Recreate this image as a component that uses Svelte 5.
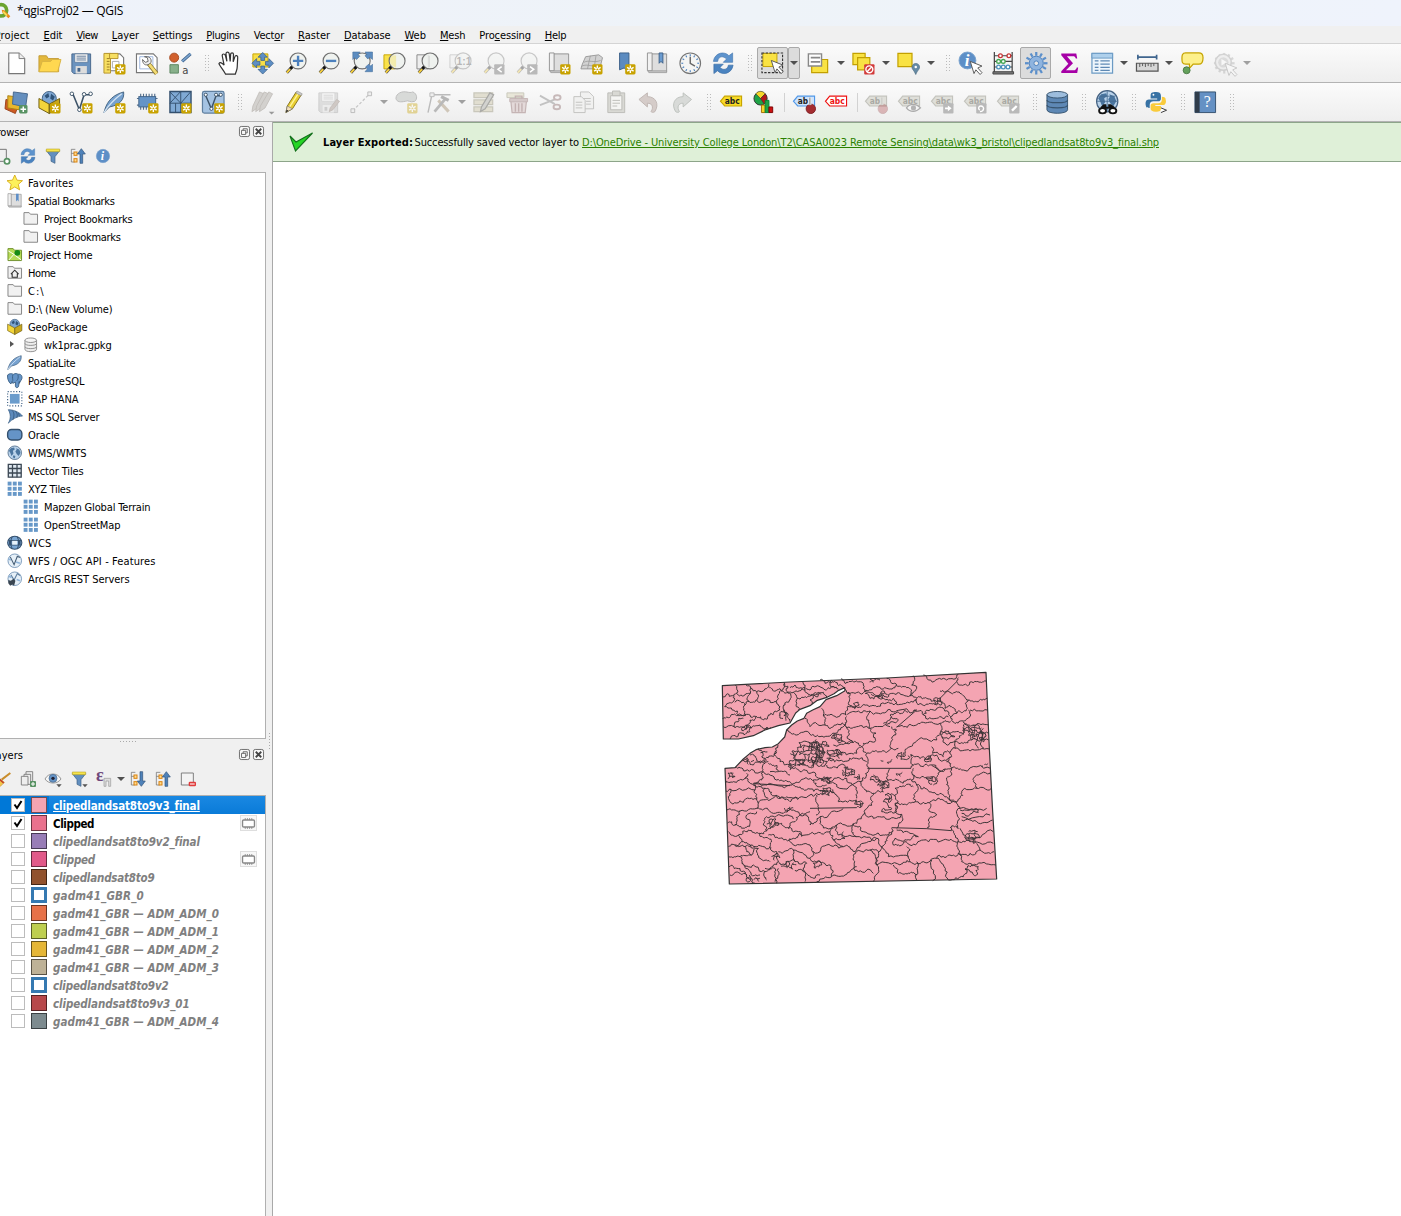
<script>
  // ---- text fitting: spreads letters so a label takes its designed width ----
  function fit(node, width) {
    const natural = node.getBoundingClientRect().width;
    const n = [...node.textContent].length;
    if (width && n) node.style.letterSpacing = (width - natural) / n + 'px';
  }

  const star = '<rect x="13" y="13" width="11" height="11" rx="1.5" fill="#c8a200"/><path d="M18.5 14.5v8M15 16.5l7 4M22 16.5l-7 4" stroke="#fff" stroke-width="1.5"/><circle cx="18.500" cy="18.500" r="1" fill="#c8a200"/>';
  const plus = '<rect x="15" y="15" width="9" height="9" rx="1.500" fill="#589263"/><path d="M19.500 16.500v6M16.500 19.500h6" stroke="#fff" stroke-width="1.600"/>';
  const lens = (cx, inner = '') => `<path d="M${cx - 6} 15.500L${cx - 12} 22" stroke="#4b4b4b" stroke-width="3.200"/><path d="M${cx - 8.500} 18.200L${cx - 12} 22" stroke="#f6cf3c" stroke-width="2"/><path d="M${cx - 5.500} 15l-2.500 2.700" stroke="#111" stroke-width="3"/><circle cx="${cx}" cy="9.500" r="8.500" fill="#eef1ee" fill-opacity=".88" stroke="#707070" stroke-width="1.200"/>${inner}`;
  const cursor = (x, y) => `<path transform="translate(${x} ${y})" d="M0 0l12.500 5-4.500 2 4.500 5-2 2-4.500-5-2 4z" fill="#fff" stroke="#555"/>`;
  const pencil = '<path d="M2 23l1.500-7L13 1l5.500 3L9 19z" fill="#e9cf32" stroke="#84701a"/><path d="M6 17l9-14" stroke="#fff59a" stroke-width="1.500"/><path d="M2 23l1.500-7L9 19z" fill="#f4dfb9" stroke="#777" stroke-width=".7"/><path d="M2 23l.8-3 2 1z" fill="#222"/><path d="M12.500 2L14 0l5.500 3-1.300 2z" fill="#ccc" stroke="#888" stroke-width=".6"/>';
  const globe = '<circle cx="12" cy="12" r="10.500" fill="#b9d2ea" stroke="#456282" stroke-width="1.200"/><path d="M3 9l3-4 5-1 1 3-3 2 1 4-3 4-2-5zM14 5l5 2 2 5-3 5-3-3-2-4 2-3zM10 16l3 1-1 4-3-2z" fill="#4a759f"/>';
  const tag = (fill, stroke, ink, txt = 'abc') => `<path d="M5 5.500h18v10.500H5l-4.500-5z" fill="${fill}" stroke="${stroke}" stroke-width="1.200"/><text x="5" y="14" font-size="9.500" font-weight="700" font-family="DejaVu Sans Condensed, DejaVu Sans, sans-serif" textLength="${txt.length > 2 ? 16 : 11}" lengthAdjust="spacingAndGlyphs" fill="${ink}">${txt}</text>`;
  const gtag = (txt) => tag('#dfdfd9', '#c3c3bd', '#a9a9a4', txt);
  const floppy = (a, b) => `<path d="M2 2h20v21H4l-2-2z" fill="${a}" stroke="${b}"/><path d="M5 2h14v9H5z" fill="#eee" stroke="${b}" stroke-width=".6"/><path d="M7 4.500h10M7 6.500h10M7 8.500h10" stroke="${b}" stroke-width=".8"/><path d="M6 15h12v8H6z" fill="#ddd"/><path d="M8 17h3v4H8z" fill="${b}"/>`;
  const refresh = '<path d="M1.500 10C3 0 14-1 18 4l4-3v10H12l3.500-3.500C12 4 7 4 6 10z" fill="#5d93cd" stroke="#4679b0" stroke-width=".7"/><path d="M22.500 14c-1.500 10-12.500 11-16.500 6l-4 3V13h10l-3.500 3.500c3 3 8 3 9-2.500z" fill="#4a83c0" stroke="#386da5" stroke-width=".7"/>';
  const gearTeeth = (r, c) => Array.from({ length: 12 }, (_, i) => `<path d="M12 ${12 - r}v4" transform="rotate(${i * 30} 12 12)" stroke="${c}" stroke-width="2.400"/>`).join('');
  const feather = '<path d="M1 23C3 15 7 5 22 1c1 8-4 14-15 16z" fill="#76a1cf" stroke="#41617f"/><path d="M1 23C6 15 12 9 20 3" stroke="#d6e6f5" stroke-width="1.300" fill="none"/>';
  const geobox = '<circle cx="12" cy="8" r="7.500" fill="#7da6d2" stroke="#3f5f80"/><path d="M7 5l4-3 1 4-3 2zM14 3l4 3-2 4-3-2z" fill="#2f5378"/><path d="M1 8l11 6v10L1 18z" fill="#f3d53b" stroke="#6b5a10"/><path d="M23 8l-11 6v10l11-6z" fill="#c8a71c" stroke="#6b5a10"/>';
  const fold = (body = '') => `<path d="M1.500 2.500h8l2 2.500h11v15.500h-21z" fill="#f1f1f1" stroke="#858585" stroke-width="1.500"/>${body}`;
  const funnel = '<path d="M2 4h20l-7 9v10l-6-3v-7z" fill="#628fbf" stroke="#3c5f84"/><path d="M2 1.500h20v4H2z" fill="#f6e34c" stroke="#b39c15" stroke-width=".8"/>';
  const info = '<circle cx="12" cy="12" r="10" fill="#5d8fc7" stroke="#7aa2cd"/><text x="8.500" y="18.500" fill="#fff" font-family="Liberation Serif, serif" font-style="italic" font-weight="700" font-size="18">i</text>';
  const tiles = [1, 9, 17].map((y) => [1, 9, 17].map((x) => `<rect x="${x}" y="${y}" width="6" height="6" fill="#6798c8"/>`).join('')).join('');
  const page = '<path d="M4 1h11l6 6v16H4z" fill="#fff" stroke="#777" stroke-width="1.200"/><path d="M15 1v6h6" fill="#eee" stroke="#777"/>';
  const tree = '<path d="M2 2v19h5M2 8h5M2 2h6" fill="none" stroke="#777" stroke-width="1.200"/><rect x="6" y="6" width="4.500" height="5" fill="#ffdb8e" stroke="#d9820f" stroke-width="1.500"/><rect x="6" y="16" width="4.500" height="5" fill="#ffdb8e" stroke="#d9820f" stroke-width="1.500"/>';
  const box = '<path d="M2 3h18v18H2z" fill="#f3f3f3" stroke="#777" stroke-width="1.400"/>';
  const roll = '<path d="M6 2h16v19H6z" fill="#dedede" stroke="#929292"/><path d="M1.500 1h5v19h-5z" fill="#f1f1f1" stroke="#929292"/><path d="M2 20h20v2H3z" fill="#c5c5c5" stroke="#929292" stroke-width=".7"/>';
  const sub = '<rect x="13" y="13" width="11" height="11" rx="1" fill="#b9b9b9"/>';
  const marble = '<circle cx="19" cy="19" r="5" fill="#a42c30" stroke="#7e2024"/><path d="M18 7v8" stroke="#eee" stroke-width="3.200"/><path d="M18 7v8" stroke="#666" stroke-width=".8"/>';

  const icons = {
    logo: '<circle cx="9" cy="11" r="8.500" fill="none" stroke="#6aa331" stroke-width="5.500"/><path d="M10 10l4 1 9 9-3 3-9-9z" fill="#e98a1b"/><path d="M12 13l6 6" stroke="#f5dc55" stroke-width="3"/>',
    newp: page,
    open: '<path d="M1 4h8l2 3h11v14H1z" fill="#e4b93d" stroke="#c39b33"/><path d="M4.500 10h9l2-2h9l-3.500 13H1z" fill="#ffd850" stroke="#d9b342"/>',
    save: floppy('#6b93bf', '#45658b'),
    layout: '<path d="M4 2h14l4 4v14H4z" fill="#fff" stroke="#777" stroke-width="1.200"/><path d="M1 1.500h7v21H1z" fill="#f7df62" stroke="#b4922a"/><path d="M7 1.500h9V7H7z" fill="#f7df62" stroke="#b4922a"/><path d="M4 7h3M4 10h3M4 13h3M4 16h3M4 19h3" stroke="#9a7a20"/><path d="M10 10h7v7h-7z" fill="none" stroke="#aaa"/>' + star,
    manager: '<path d="M.5 2h18l4 4v16H.5z" fill="#fff" stroke="#777" stroke-width="1.200"/><path d="M4 5h14v13H4z" fill="none" stroke="#9cb4dd"/><path d="M13 12l9 11" stroke="#8a7428" stroke-width="4.500"/><path d="M14 13l8 10" stroke="#f3dc74" stroke-width="2.800"/><path d="M9 5l3 1 1 4-3 1-3-3c0 5 3 7 7 5l2-2c1-4-2-7-7-6z" fill="#eee" stroke="#666"/>',
    style: '<circle cx="5.500" cy="6" r="4.800" fill="#d1602d" stroke="#a64a20"/><path d="M14 10l9-8" stroke="#3f648d" stroke-width="3.500"/><path d="M14 10l9-8" stroke="#7ca5d0" stroke-width="1.500"/><path d="M1 13.500h9v9H1z" fill="#88b08b" stroke="#5c8661"/><text x="14" y="23" fill="#444" font-size="12" font-family="DejaVu Sans, sans-serif">a</text>',
    hand: '<path d="M8 23.500c-2-4-5-7-7-11 1-2 3.500-1 5.500 1.500L4.500 4c0-2.500 2.700-2.500 3.500 0l1.500 6-1-8c0-2.500 3-2.500 3.500 0l1 8 .5-7.500c0-2 3-2 3 0l-.3 8L18 5c.5-2 3.500-1.500 3 1l-.5 10c0 3-1 4-2 7.500z" fill="#fff" stroke="#333" stroke-width="1.300"/>',
    pansel: '<path d="M2 2h16v14H2z" fill="#f7de45" stroke="#c8a500"/>' + [0, 90, 180, 270].map((a) => `<path d="M12.500 .5l5 5h-3v3.500h-4V5.500h-3z" transform="rotate(${a} 12.500 12)" fill="#5d8ec4" stroke="#39608a" stroke-width=".8"/>`).join(''),
    zin: lens(15, '<path d="M15 4v11M9.500 9.500h11" stroke="#4c80bd" stroke-width="2.500"/>'),
    zout: lens(15, '<path d="M9.500 9.500h11" stroke="#4c80bd" stroke-width="2.500"/>'),
    zfull: lens(13, '') + '<path d="M3 0h8L8.500 2.500l2 2L7 8 5 6 3 8zM24 0v8l-3-2.500-2 2L16 4l2-1.500L16 0zM24 21h-8l2.500-3-2-2 3.500-3 2 2 2-2z" fill="#5c8cc0" stroke="#456f9c" stroke-width=".6"/>',
    zsel: '<path d="M1 3h12v15H1z" fill="#f9e14a" stroke="#c9a500"/>' + lens(15, '<path d="M9 4h5v12c-7-1-8-8-5-12z" fill="#f3e99a" opacity=".7"/>'),
    zlay: '<path d="M1 3h12v15H1z" fill="#eee" stroke="#888"/>' + lens(15, '<path d="M14 4v12" stroke="#ccc"/>'),
    z11: '<g opacity=".35"><path d="M1 3h12v14H1z" fill="#eee" stroke="#888"/>' + lens(15, '<text x="8" y="13.500" font-size="11" font-weight="700" fill="#444" font-family="Liberation Sans, sans-serif">1:1</text>') + '</g>',
    zlast: '<g opacity=".35">' + lens(15) + '</g>' + sub + '<path d="M21 15.500l-4 3 4 3" stroke="#fff" stroke-width="1.600" fill="none"/>',
    znext: '<g opacity=".35">' + lens(15) + '</g>' + sub + '<path d="M16 15.500l4 3-4 3" stroke="#fff" stroke-width="1.600" fill="none"/>',
    newmap: roll + star,
    view3d: '<path d="M6 5l14-2 4 3-3 12H1c1-5 3-8 5-13z" fill="#d2d2d2" stroke="#999"/><path d="M4 11c6-3 11 1 18-2M2 15c6-3 12 2 19-1M11 4L8 18M17 4l-2 14" fill="none" stroke="#999" stroke-width=".8"/>' + star,
    bm: '<path d="M7 1h10v21l-5-5-5 2z" fill="#5b8bc0" stroke="#3b5f87"/>' + star,
    bms: roll + '<path d="M14 1h4v11l-2-2-2 2z" fill="#6a9bd0" stroke="#3b5f87"/>',
    clock: '<circle cx="12" cy="12" r="11" fill="#f5f5f3" stroke="#757575" stroke-width="1.200"/>' + Array.from({ length: 12 }, (_, i) => `<path d="M12 2.500v2" transform="rotate(${i * 30} 12 12)" stroke="#4c80bd" stroke-width="1.200"/>`).join('') + '<path d="M12 5v7l5 3" fill="none" stroke="#666" stroke-width="1.500"/>',
    refresh,
    select: '<path d="M2 1.500h15v14H2z" fill="#f9e243" stroke="#c3a000"/><path d="M1 1h22v21H1z" fill="none" stroke="#333" stroke-width="1.200" stroke-dasharray="2.500 1.500"/>' + cursor(11, 9),
    form: '<path d="M5 8h17v14H5z" fill="#f9e243" stroke="#c3a000" stroke-width="1.300"/><path d="M1.500 2h14v13h-14z" fill="#fff" stroke="#888" stroke-width="1.500"/><path d="M4 6h10M4 10.500h10" stroke="#888" stroke-width="2"/>',
    desel: '<path d="M1 1.500h13v12H1z" fill="#f9e243" stroke="#c3a000" stroke-width="1.300"/><path d="M6 6h13v13H6z" fill="#f9e243" stroke="#c3a000" stroke-width="1.300"/><rect x="13" y="13" width="11" height="11" rx="1" fill="#d23a3a"/><circle cx="18.500" cy="18.500" r="3.700" fill="none" stroke="#fff" stroke-width="1.500"/><path d="M16 21l5-5" stroke="#fff" stroke-width="1.500"/>',
    selloc: '<path d="M1 1.500h15v14H1z" fill="#f9e243" stroke="#c3a000" stroke-width="1.300"/><path d="M20 24c-2-5-4-5-4-8 0-5 8-5 8 0 0 3-2 3-4 8z" fill="#668ba5" stroke="#49697f" stroke-width=".7"/><circle cx="20" cy="16" r="1.300" fill="#fff"/>',
    ident: '<circle cx="9" cy="9" r="9" fill="#5d8fc7" stroke="#7aa2cd"/><text x="6" y="15" fill="#fff" font-family="Liberation Serif, serif" font-style="italic" font-weight="700" font-size="18">i</text>' + cursor(12, 10),
    abacus: '<path d="M2.500 0v22M21.500 0v22M3 4h18M3 10h18M3 16h18" stroke="#444" stroke-width="1.300"/><path d="M1 21h22v2.500H1z" fill="#777" stroke="#444"/><g fill="#fff" stroke-width="1.400"><g stroke="#c63535"><circle cx="9" cy="4" r="2"/><circle cx="18" cy="4" r="2"/></g><g stroke="#43a652"><circle cx="7" cy="10" r="2"/><circle cx="12" cy="10" r="2"/></g><g stroke="#4890bb"><circle cx="7" cy="16" r="2"/><circle cx="12" cy="16" r="2"/><circle cx="17" cy="16" r="2"/></g></g>',
    gear: gearTeeth(12, '#5b8fcb') + '<circle cx="12" cy="12" r="7.500" fill="#8fb4df" stroke="#4c80bd"/><circle cx="12" cy="12" r="2.500" fill="#e8e8e8" stroke="#4c80bd"/>',
    sigma: '<path d="M3.500 1.500h16l1 5.500H19c-.5-2-1.500-2.500-3-2.500H9.500L16 12l-7.500 7.500h8c2 0 3-1 3.500-3h1.500l-1 6H3.500V20.500L11 12.500 3.500 3.500z" fill="#a600a6"/>',
    table: '<path d="M1 1.500h22v21H1z" fill="#eef6fc" stroke="#6b9ac4" stroke-width="1.300"/><path d="M1 1.500h22v5H1z" fill="#aed0ec" stroke="#6b9ac4"/><path d="M4 9.500h4M10 9.500h10M4 13h4M10 13h10M4 16.500h4M10 16.500h10M4 19.500h4M10 19.500h10" stroke="#5e89b4" stroke-width="1.300"/>',
    ruler: '<path d="M2 5.500h20M2 3v5M22 3v5" stroke="#3f658e" stroke-width="1.800"/><path d="M.5 12h23v8.500H.5z" fill="#d7d7d7" stroke="#555" stroke-width="1.300"/><path d="M4 12v4M7 12v3M10 12v4M13 12v3M16 12v4M19 12v3" stroke="#555"/>',
    tip: '<path d="M5 1h14c4 0 4.500 3 4.500 5s0 7-4.500 7h-6l-4 4.500V13H5c-4 0-4-3-4-6s0-6 4-6z" fill="#fdf08b" stroke="#c6a400" stroke-width="1.300"/><circle cx="6" cy="19.500" r="3.700" fill="#64a15b" stroke="#4a7a45"/>',
    action: `<g opacity=".28">${gearTeeth(11, '#888')}<circle cx="11" cy="11" r="8.500" fill="#ddd" stroke="#777" stroke-width="1.600"/><circle cx="11" cy="11" r="5.500" fill="#999"/><path d="M9 7.500l6 3.500-6 3.500z" fill="#fff"/>${cursor(13, 12)}</g>`,

    sources: '<path d="M1 9l14 4-4 11L0 19z" fill="#ce5b22" stroke="#97411a"/><path d="M3 5l14 2-2 13-12-2z" fill="#e9b72c" stroke="#aa8015"/><path d="M9 1l15 2-2 14L8 14z" fill="#658fbe" stroke="#45658b"/>' + plus,
    gpkg: geobox + star,
    shp: '<path d="M3 3l7 17L15 4h7" fill="none" stroke="#3d5368" stroke-width="1.700"/><g fill="#fff" stroke="#3d5368"><circle cx="2" cy="3" r="1.900"/><circle cx="15" cy="3.500" r="1.900"/><circle cx="22" cy="3" r="1.900"/><circle cx="10" cy="20" r="1.900"/></g>' + star,
    feather: feather + star,
    chip: '<path d="M5 3v17M8 3v17M11 3v17M14 3v17M17 3v17M20 3v17M1 8h22M1 15h22" stroke="#536d89" stroke-width="1.200"/><rect x="3" y="6" width="18" height="11" fill="#6594c7" stroke="#406387"/>' + star,
    mesh: '<path d="M1 .5h22.500V23H1z" fill="#7fa9d4" stroke="#34506e" stroke-width="1.500"/><path d="M1 13h22M12.500 1v22M1 1l11.500 12L23 1M1 13l11-12M7 13v10" stroke="#34506e" fill="none"/>' + star,
    virt: '<rect x=".5" y=".5" width="23" height="23" rx="2" fill="#a5c3e2" stroke="#5f7f9f" stroke-width="1.300"/><path d="M4 5l6 14 5-14h5" fill="none" stroke="#3d5368" stroke-width="1.500"/><g fill="#fff" stroke="#3d5368"><circle cx="4" cy="4" r="1.700"/><circle cx="15" cy="4" r="1.700"/><circle cx="20" cy="4" r="1.700"/><circle cx="10" cy="19" r="1.700"/></g>' + star,
    pencils: '<g fill="#d3d1ce" stroke="#bdbab6" stroke-width=".8"><path d="M1 22l1-6L9 1l5 2-7 15z"/><path d="M5 22l1-6L14 1l5 2-8 15z"/><path d="M9 22l1-6L19 1l4 2-8 15z"/></g><path d="M19 22h6l-3 3z" fill="#999"/>',
    pencil,
    saveg: `<g opacity=".3">${floppy('#aaa', '#777')}</g><path d="M13 22l1-4 7-9 3 2-7 9z" fill="#cfc8c4" stroke="#bdb5b1" stroke-width=".7"/>`,
    line: '<path d="M3 21L21 3" stroke="#c4c4c4" stroke-width="1.300" stroke-dasharray="3 2"/><g fill="#eee" stroke="#bbb"><path d="M1 19h4v4H1zM19 1h4v4h-4z"/></g>',
    blob: '<path d="M5 2c6-3 10 1 14-1 5 2 5 8 2 10-5 2-7-2-10 0-5 1-9 1-10-3 0-3 2-5 4-6z" fill="#d8dad8" stroke="#bbb"/><g opacity=".38">' + star + '</g>',
    vertex: '<g stroke="#bbb" fill="none"><path d="M5 4h19M4 5L0 23" stroke-width="1.500"/><path d="M2 2h4.500v4H2z" fill="#eee"/><path d="M11 10l11 12" stroke="#cfc6b8" stroke-width="3.200"/><path d="M18 9L7 22" stroke="#b9b9b9" stroke-width="3"/><path d="M14 6l8 4" stroke="#b5b5b5" stroke-width="3.500"/></g>',
    multi: '<g fill="#e1ded0" stroke="#c9c7bb" stroke-width="1.300"><path d="M1 2h20v5H1zM1 9.500h20v5H1zM1 17h20v5H1z"/><path d="M8 22l1-5L18 2l4 2-9 15z" fill="#d2d2cf" stroke="#a9a9a6"/></g>',
    trash: '<path d="M1 2h18v5H1z" fill="#e8e6d8" stroke="#c9c7bb"/><path d="M5 9h17l-1.500 14h-14z" fill="#e4dada" stroke="#c5b5b5" stroke-width="1.300"/><path d="M4 8h19v3.500H4z" fill="#d5c9c9" stroke="#c5b5b5"/><path d="M10 8V5.500h7V8M10 13v9M13.500 13v9M17 13v9" fill="none" stroke="#c3b2b2" stroke-width="1.500"/>',
    cut: '<path d="M1 5l16 9M1 15l16-6" stroke="#c2c2c2" stroke-width="2"/><g fill="none" stroke="#c7b9b9" stroke-width="2"><ellipse cx="19.500" cy="7" rx="3.500" ry="2.500"/><ellipse cx="19" cy="17" rx="3.500" ry="2.500"/></g>',
    copy: '<g fill="#f1f1f0" stroke="#c1c1bf"><path d="M9 1h9l5 5v13H9z"/><path d="M2 6h8l4 4v13H2z"/><path d="M4 12h7M4 15h7M4 18h7M12 8h8M15 11h5M15 14h5" /></g>',
    paste: '<g fill="#d9d9d4" stroke="#bcbcb8"><path d="M3 2h18v21H3z"/><path d="M6 5h12v15H6z" fill="#f5f5f3"/><path d="M8 0h8v5H8zM8 10h8M8 13h8M8 16h5"/></g>',
    undo: '<path d="M1 9l9-7v4c9 0 13 8 8 16-1 1-4 1-4 0 3-5 1-9-4-9v4z" fill="#d5ccc9" stroke="#bfb5b2"/>',
    redo: '<path d="M23 9l-9-7v4c-9 0-13 8-8 16 1 1 4 1 4 0-3-5-1-9 4-9v4z" fill="#d8dad8" stroke="#bcc0bc"/>',
    abc: tag('#f8da26', '#c8a500', '#222'),
    pie: '<circle cx="8" cy="8" r="7" fill="#1fa246" stroke="#333"/><path d="M8 8L3 3c3-4 8-3 10 0z" fill="#f5d52a" stroke="#333" stroke-width=".6"/><path d="M8 8l5-5c3 3 2 8-1 11z" fill="#b41717" stroke="#333" stroke-width=".6"/><path d="M9 15h4v8H9z" fill="#f5d52a" stroke="#a06c00"/><path d="M13 10h4v13h-4z" fill="#1fa246" stroke="#083"/><path d="M17 17h4v6h-4z" fill="#c11" stroke="#700"/>',
    ab: tag('#cfe3fb', '#4f97e8', '#222', 'ab') + marble,
    abcr: tag('#fff', '#e11', '#e11'),
    g1: gtag('ab') + `<g opacity=".3">${marble}</g>`,
    g2: gtag() + '<path d="M9 18c4-5 10-5 15 0-5 5-11 5-15 0z" fill="#f5f5f5" stroke="#aaa" stroke-width="1.300"/><circle cx="16.500" cy="18" r="2.700" fill="#b3b3b3"/>',
    g3: gtag() + sub + '<path d="M15 17.500h3v-2l4 3-4 3v-2h-3z" fill="#fff"/>',
    g4: gtag() + sub + '<path d="M17 22c5 0 5-6 1-6-3 0-3 4-1 4" fill="none" stroke="#fff" stroke-width="1.500"/>',
    g5: gtag() + sub + '<path d="M16 21l5-5" stroke="#fff" stroke-width="2.500"/>',
    db: '<path d="M1 4v16c0 5 22 5 22 0V4z" fill="#5e88b5" stroke="#38546f"/><path d="M1 9.500c0 4 22 4 22 0M1 15c0 4 22 4 22 0" fill="none" stroke="#38546f" stroke-width="1.300"/><ellipse cx="12" cy="4" rx="11" ry="3.500" fill="#9dbddd" stroke="#38546f"/>',
    search: '<g transform="translate(-1 -2) scale(1.080)">' + globe + '<path d="M4 7h16M2 12h20M12 2v20" stroke="#45698e" stroke-width=".8"/></g><path d="M5 17l3-3h3v3h2v-3h3l4 3v5h-5v-3h-5v3H5z" fill="#111"/><g fill="#fff" stroke="#111" stroke-width="2"><ellipse cx="7" cy="21" rx="3.700" ry="2.800"/><ellipse cx="18" cy="21" rx="3.700" ry="2.800"/></g>',
    py: '<path d="M12 1c-5 0-6 1-6 4v3h7v1H4c-3 0-4 3-3 7 0 2 2 2 4 2v-3c0-3 2-4 4-4h5c2 0 3-1 3-3V5c0-3-2-4-5-4z" fill="#3772a4"/><path d="M11 22c5 0 6-1 6-4v-2h-6v-1h8c3 0 4-3 3-6 0-2-1-3-4-3v3c0 3-2 4-4 4H9c-2 0-3 1-3 3v3c0 2 2 3 5 3z" fill="#f9cb3c"/><circle cx="9" cy="4" r="1" fill="#fff"/><path d="M17 18l6 2.500-6 2.500" fill="#fff" stroke="#333"/>',
    help: '<path d="M1 1h22v22H1z" fill="#6591c4" stroke="#34506e"/><path d="M1 1h5v22H1z" fill="#303d4b"/><text x="10.500" y="17" font-family="Liberation Serif, serif" font-size="17" fill="#fff">?</text>',

    addlay: '<path d="M-5 2h22v15" fill="none" stroke="#777" stroke-width="1.500"/><path d="M-5 20h18" stroke="#777" stroke-width="1.500"/><circle cx="18" cy="20" r="4" fill="#fff" stroke="#589263" stroke-width="2.500"/>',
    funnel,
    collapse: tree + '<path d="M15 23V9h-4l6-8 6 8h-4v14z" fill="#4f82b9" stroke="#2f5278"/>',
    expand: tree + '<path d="M15 1v14h-4l6 8 6-8h-4V1z" fill="#4f82b9" stroke="#2f5278"/>',
    info,
    fav: '<path d="M12 0l3.500 8 8.500.8-6.500 5.700 2 8.500L12 18.500 4.500 23l2-8.500L0 8.800 8.500 8z" fill="#fdf15b" stroke="#d4a60c" stroke-width="1.300"/>',
    sbm: roll + '<path d="M14 1h4v12l-2-2-2 2z" fill="#5d8fc7"/>',
    folder: fold(),
    phome: '<path d="M1.500 2.500h8l2 2.500h11v16h-21z" fill="#b8dc56" stroke="#71912f" stroke-width="1.500"/><path d="M2 6l8 5 12 9M3 20l8-9" stroke="#fff" stroke-width="1.500" fill="none"/><circle cx="16" cy="9" r="4.500" fill="#168a16"/>',
    home: fold('<path d="M6 14l6-6 6 6M8 13v6h8v-6" fill="none" stroke="#333" stroke-width="1.700"/>'),
    geobox,
    dbg: '<path d="M3 5v14c0 5 18 5 18 0V5" fill="#eee" stroke="#888" stroke-width="1.400"/><path d="M3 10c0 4 18 4 18 0M3 15c0 4 18 4 18 0" fill="none" stroke="#888" stroke-width="1.400"/><ellipse cx="12" cy="5" rx="9" ry="3.500" fill="#f5f5f5" stroke="#888" stroke-width="1.400"/>',
    feath: feather,
    pg: '<path d="M1 3c3-3 7-2 9-1 3-2 6-1 7 0 5-1 7 3 6 7l-4 7v-3l-1 7c0 3-5 4-5 0v-6l-4 2-1-3-2 4C2 14 0 7 1 3z" fill="#6594c7" stroke="#34587e" stroke-width="1.300"/><path d="M9 3c-1 4 0 7 0 9M17 3c1 4 0 7-2 9" fill="none" stroke="#34587e" stroke-width="1.300"/>',
    hana: '<path d="M4.500 4.500h15v15h-15z" fill="#6b9ccc"/><path d="M1 1h22v22H1z" fill="none" stroke="#34587e" stroke-width="1.700" stroke-dasharray="1.700 2.700"/>',
    ms: '<path d="M2 1c8 0 18 4 22 10-8 0-16 5-22 11C6 15 6 8 2 1z" fill="#5d8abb" stroke="#34587e"/><path d="M8 2c4 5 3 9 1 15M13 3c4 5 3 7 2 11M18 6l1 5" fill="none" stroke="#28496c"/>',
    oracle: '<rect x="1" y="4" width="22" height="16" rx="6" fill="#6594c7" stroke="#34506e" stroke-width="2.200"/>',
    wms: globe,
    vt: '<path d="M2 2h20v20H2z" fill="#dfe8f0" stroke="#3a4652" stroke-width="2"/><path d="M2 8.500h20M2 15.500h20M8.500 2v20M15.500 2v20" stroke="#3a4652" stroke-width="2"/>',
    tiles,
    wcs: '<ellipse cx="12" cy="12" rx="11" ry="10" fill="#7aa6d3" stroke="#34506e" stroke-width="1.700"/><path d="M2 8.500h20M2 15.500h20M8 3c-3 6-3 12 0 18M16 3c3 6 3 12 0 18" fill="none" stroke="#34506e" stroke-width="1.500"/><path d="M8 9h8v6H8z" fill="#e8f2fa"/><path d="M3 9h4v6H3zM17 9h4v6h-4z" fill="#34506e"/>',
    wfs: '<circle cx="12" cy="12" r="10.500" fill="#e6f0f8" stroke="#6c8eb2" stroke-width="1.300"/><path d="M5 6l6 12 5-13 4 2" fill="none" stroke="#445c74" stroke-width="1.700"/><path d="M14 14l6 2M2 9l4 2" stroke="#8fb4da" stroke-width="2.500"/>',
    arc: '<circle cx="12" cy="12" r="10.500" fill="#e6f0f8" stroke="#6c8eb2" stroke-width="1.300"/><path d="M6 6l5 8 5-10 4 3" fill="none" stroke="#5f7f9f" stroke-width="1.700"/><path d="M15 13l5 2M3 8l4 2" stroke="#8fb4da" stroke-width="2.500"/><path d="M2 14l4 1 4-3 3 3-2 8-3-2-3 2-3-4z" fill="#3a4652"/>',
    broom: '<path d="M10 13L23 3" stroke="#c98d2c" stroke-width="3"/><path d="M-3 12l7-3 10 8-6 6H-3z" fill="#f3c84b" stroke="#c78f2c"/><path d="M4 10l9 8" stroke="#c0392b" stroke-width="2"/>',
    group: '<g fill="#eee" stroke="#777" stroke-width="1.300"><path d="M9 1h10v15H9z"/><path d="M6 5h10v15H6z"/><path d="M2 8h10v13H2z"/></g>' + plus,
    eye: '<path d="M0 12c5-10 19-10 24 0-5 8-19 8-24 0z" fill="#f7f7f7" stroke="#888" stroke-width="1.300"/><circle cx="12" cy="11" r="6" fill="#6594c7" stroke="#47688b"/><circle cx="12" cy="11" r="2.500" fill="#223"/><path d="M17 20h8l-4 4.500z" fill="#555"/>',
    funnel2: funnel + '<path d="M17 20h8l-4 4.500z" fill="#555"/>',
    eps: '<text x="0" y="15" font-size="27" font-weight="700" fill="#6f4a7d" font-family="Liberation Serif, serif">ε</text><path d="M12 11h10v12h-3v-8h-4v8h-3z" fill="#ddd" stroke="#999"/>',
    remove: box + '<rect x="13" y="16" width="11" height="7" rx="2" fill="#e03c3c"/><path d="M15 19.500h7" stroke="#fff" stroke-width="1.600"/>',
    check: '<path d="M1 5l6 6L23.500 2 6.500 20z" fill="#25d525" stroke="#14701c" stroke-width="1.100"/>',
    float: '<rect x="1" y="1" width="22" height="22" rx="4" fill="#f8f8f8" stroke="#555" stroke-width="1.800"/><path d="M9 6h9v9H9z" fill="none" stroke="#555" stroke-width="1.800"/><path d="M5.500 9.500h9v9h-9z" fill="#f8f8f8" stroke="#555" stroke-width="1.800"/>',
    close: '<rect x="1" y="1" width="22" height="22" rx="4" fill="#f8f8f8" stroke="#555" stroke-width="1.800"/><path d="M6 6l12 12M18 6L6 18" stroke="#444" stroke-width="4"/>',
    mem: '<path d="M6 2v20M10 2v20M14 2v20M18 2v20" stroke="#888" stroke-width="1.600"/><rect x="1" y="5.500" width="22" height="13" rx="2" fill="#fff" stroke="#888" stroke-width="2.500"/>'
  };

  const menus = [['Project', 'P', 35], ['Edit', 'E', 19], ['View', 'V', 21.500], ['Layer', 'L', 27], ['Settings', 'S', 39.500], ['Plugins', 'P', 33.500], ['Vector', 'o', 30.500], ['Raster', 'R', 32], ['Database', 'D', 46.500], ['Web', 'W', 21.500], ['Mesh', 'M', 25.500], ['Processing', 'c', 51.500], ['Help', 'H', 21.500]];
  const cutAt = (t, k) => { const i = t === 'Vector' ? 4 : t.indexOf(k); return [t.slice(0, i), k, t.slice(i + 1)]; };

  // "|" is a grip, "v" / "w" a drop arrow (enabled / dimmed), "/" a separator
  const bar1 = 'newp open save layout manager style | hand pansel zin zout zfull zsel zlay z11 zlast znext newmap view3d bm bms clock refresh | !select ^ form v desel v selloc v | ident abacus !gear sigma table v ruler v tip action w'.split(' ');
  const bar2 = 'sources gpkg shp feather chip mesh virt | pencils pencil saveg line w blob vertex w multi trash cut copy paste undo redo | abc pie / ab abcr / g1 g2 g3 g4 g5 | db | search | py | help |'.split(' ');

  const tree1 = [['fav', 'Favorites', 45.500], ['sbm', 'Spatial Bookmarks', 86.500], ['folder', 'Project Bookmarks', 88.500, 1], ['folder', 'User Bookmarks', 76.500, 1], ['phome', 'Project Home', 64.500], ['home', 'Home', 27.500], ['folder', 'C:\\', 16.500], ['folder', 'D:\\ (New Volume)', 84.500], ['geobox', 'GeoPackage', 59.500], ['dbg', 'wk1prac.gpkg', 67.500, 1, 1], ['feath', 'SpatiaLite', 47.500], ['pg', 'PostgreSQL', 56.500], ['hana', 'SAP HANA', 50.500], ['ms', 'MS SQL Server', 71.500], ['oracle', 'Oracle', 31.500], ['wms', 'WMS/WMTS', 58.500], ['vt', 'Vector Tiles', 55.500], ['tiles', 'XYZ Tiles', 42.500], ['tiles', 'Mapzen Global Terrain', 106.500, 1], ['tiles', 'OpenStreetMap', 76.500, 1], ['wcs', 'WCS', 23.500], ['wfs', 'WFS / OGC API - Features', 127.500], ['arc', 'ArcGIS REST Servers', 101.500]];

  const layers = [['clipedlandsat8to9v3_final', 'pink', 146.500, 'sel'], ['Clipped', 'rose', 41, 'on', 1], ['clipedlandsat8to9v2_final', 'purple', 147], ['Clipped', 'magenta', 42, '', 1], ['clipedlandsat8to9', 'brown', 101.500], ['gadm41_GBR_0', 'ring', 91], ['gadm41_GBR — ADM_ADM_0', 'orange', 166], ['gadm41_GBR — ADM_ADM_1', 'lime', 166], ['gadm41_GBR — ADM_ADM_2', 'gold', 166], ['gadm41_GBR — ADM_ADM_3', 'tan', 166], ['clipedlandsat8to9v2', 'ring', 115.500], ['clipedlandsat8to9v3_01', 'red', 136.500], ['gadm41_GBR — ADM_ADM_4', 'slate', 166]];

  // ---- map: boundaries roughened by seeded midpoint displacement ----
  let seed = 41;
  const rnd = () => ((seed = (seed * 16807) % 2147483647) / 2147483647) - 0.5;
  function rough(pts, amp = 0.66) {
    let p = pts;
    for (let k = 0; k < 3; k++) {
      const q = [p[0]];
      for (let i = 1; i < p.length; i++) {
        const [a, b] = p[i - 1], [c, d] = p[i];
        const l = Math.hypot(c - a, d - b);
        if (l > 6) {
          const o = rnd() * amp * Math.min(l, 22);
          q.push([(a + c) / 2 - ((d - b) / l) * o, (b + d) / 2 + ((c - a) / l) * o]);
        }
        q.push(p[i]);
      }
      p = q;
    }
    return 'M' + p.map((v) => v.map((n) => n.toFixed(1)).join(' ')).join('L');
  }
  const parse = (s) => s.trim().split(' ').map((v) => v.split(',').map(Number));
  const land = 'M37 62L240 51 530 39 828 22 838 250 848 440 860 642 58 657 50 440 45 310 75 308 100 282 120 265 138 254 165 248 187 246 205 236 224 216 230 195 245 180 262 168 282 160 290 145 308 135 330 125 348 104 380 92 405 77 404 68 386 76 372 86 348 98 322 106 302 121 270 133 257 144 240 174 205 182 165 195 130 212 85 222 40 222Z';
  const borders = `37,95 68,92 78,85 80,70 76,60|108,60 122,70 140,80 160,78 172,68 178,56|80,85 105,90 120,85 125,70|122,85 112,98 118,110 140,105 165,102 200,112 205,100 215,78 222,52|72,92 68,112 44,125|75,112 105,120 118,110|105,120 108,150 85,152 82,138 44,125|38,162 55,158 80,152 105,150 140,155 160,165 175,150 200,140 210,125 200,112|40,185 60,182 75,188 110,182 125,188 108,205 85,210 60,222|110,182 120,165 140,155|125,188 150,180 175,190|75,188 80,170 100,160|222,52 232,80 240,105 225,120 222,140 235,160 240,170|218,78 250,82 262,100 258,120 266,135|250,82 285,75 310,88 340,82 350,98|285,75 280,50|262,100 290,98 310,88|240,68 255,60 280,68 300,75 330,65 355,68 385,72|366,45 360,60 375,68|330,45 345,55 366,50 395,62 405,68|310,88 300,105 305,118|140,80 145,90 140,105|178,68 200,75 218,78
|395,40 405,55 430,50 460,60 465,78 450,85 410,82 405,72|465,78 490,68 530,70 560,62 590,68 605,75 600,92 580,90 550,85 520,90 490,85 465,78|530,40 545,55 560,62|610,32 605,60 620,70 600,92|480,42 490,48 510,45|640,30 655,45 700,40 740,35 745,28|745,38 740,50|690,78 720,82 750,85 775,105 772,130 760,140 740,145 722,155 728,170 760,168 780,155 775,135|740,50 760,60 800,50 828,48|775,105 800,110 832,100|780,135 832,135|600,92 625,95 650,100 680,110 695,115 690,100|620,100 625,120 655,118 680,120|410,82 420,100 415,115 440,125 470,120 500,125 540,115 575,118 620,105|465,85 480,100 520,100 550,100 560,115|410,150 440,140 480,138 530,140 570,135 620,135|610,138 640,150 680,160 715,155|640,150 650,135 680,130 715,140 722,155|410,155 405,180 440,185 480,190 540,185|480,138 470,160 480,190|520,175 540,150 575,145 595,140|530,180 565,165 545,155|695,115 705,130 725,125 740,145
|335,130 340,150 370,152 408,150 412,125|340,150 345,180 370,185 405,180|285,160 300,185 345,180|230,195 260,210 300,208 330,215 375,205 405,180|410,185 412,220 430,232 455,245 460,235 495,230 498,205 480,190|545,185 560,195 545,220 540,245 555,255 565,250|560,185 600,178 640,172 690,175 722,170|690,175 692,200 680,225 620,228 600,245 585,262|692,200 720,205 758,208 760,180|695,210 720,205 735,215 715,222 695,215|690,205 700,232 735,230 755,210|735,230 735,250 720,262 725,275 710,290 725,310 705,312|735,250 780,258 838,252|760,170 790,180 836,180|785,195 836,205|785,225 836,225|800,205 805,250|820,190 822,250|760,180 785,195 785,225 760,235 735,230|455,245 470,265 472,305 468,335 455,350|470,265 500,258 530,262 545,250|605,270 610,300|600,270 640,275 680,270 690,285 720,275|665,245 668,265 700,275 705,260 720,262|602,310 610,300 640,305 665,300 705,312
|375,255 400,262 440,265 455,245|370,240 410,235 430,232|375,205 380,225 430,232|350,265 375,275 400,265|350,280 400,290 440,280 470,290|350,300 390,300 410,310|725,310 760,315 842,310|725,310 725,330 712,350 715,380 725,412|842,318 800,330 790,350 800,370 843,370|665,300 690,320 705,312|690,320 680,345 670,360|610,310 612,330 640,335 670,335|612,330 605,345 570,350 535,345 510,365|540,310 535,345|490,330 510,345 505,360|480,345 490,335 510,345 500,352 480,345|620,360 650,372 690,385 720,405 740,410 750,400 755,380 800,370|605,345 620,360 610,400 615,410 590,420 560,415 555,440|555,370 575,365 590,358 610,365|525,390 555,392 565,410 555,415 560,440 515,440 520,430 545,430 520,410 540,400 525,390|490,385 488,410 465,445 440,475 430,480|490,385 520,380 525,350|455,350 465,375 490,385|555,370 555,392|615,410 650,415 680,405 710,410 725,412|660,415 660,440 680,450 655,465 650,490|750,430 740,445 748,460 745,490 720,488
|465,445 490,460 540,462 575,448 555,440|575,448 578,460 560,490|725,412 750,430 830,430|750,435 805,435 805,442 755,445|755,455 840,450|755,465 800,470 848,465|545,490 540,510 525,530 515,545 505,560|430,480 460,500 520,510 545,500|430,480 425,500 440,515 500,520 515,545|560,495 600,505 625,515 590,525 555,520 550,540 580,535 600,540 640,525 700,525 745,530|725,488 735,510 745,530 785,530 850,535|750,490 760,510 785,520 850,500|745,530 745,565 720,570 680,580 640,590 600,590 595,575 600,555 590,545|745,565 755,590 800,600 858,600|680,580 700,600 715,645|745,565 780,565 810,555 852,560|765,612 785,600 805,605 800,630 780,620 765,612|715,645 760,635 765,612|665,585 668,647|620,590 620,645|600,590 570,600 500,600 480,555 440,560|500,600 490,650|550,600 565,625 600,625 620,630|515,545 535,575 595,575|480,555 505,560 500,600|440,560 430,585 445,620 490,625|440,605 405,630 365,635|800,535 810,555
|45,345 70,350 105,340 130,360 135,375 60,372 48,378|75,308 105,318 158,320|105,340 110,325|158,320 155,345 130,360|100,285 130,300 165,295 175,290|165,295 160,320 200,345 235,350|205,240 195,260 210,290 240,300 270,320 300,325|130,355 170,360 240,360 270,350 320,345 350,350|135,360 165,370 185,390 210,400 250,400 300,390 320,385 350,380|60,372 60,410 100,412 140,402 135,375|50,435 90,438 140,430 145,415 140,402|145,415 180,405 210,400|140,430 175,435 220,445 250,435|250,435 290,450 300,480 330,455 380,440 400,430|90,438 80,455 75,480 52,475|75,480 95,490 120,475 110,450 140,440|55,500 85,510 115,495 150,505 170,498 190,480|170,455 160,480 170,498|85,510 95,530 135,545 180,545 175,520 150,505|190,480 215,475 235,490 255,470 270,450 300,440|175,510 205,520 250,520 270,505 320,505 360,500 380,480 430,475|235,490 270,500 275,515|320,390 325,420 318,450|345,380 380,390 385,410 440,405|410,340 430,360 440,400|300,325 330,340 370,345 410,340|310,345 325,365 350,360|350,350 380,365 455,350|145,250 155,275 165,290 190,275 200,260|120,270 140,285 165,290|175,295 200,300 205,320 240,330|235,350 260,365 300,372 345,380|180,320 205,318|165,370 175,400|210,400 240,410 265,400|170,455 200,452 250,462
|55,545 75,540 105,545 135,545|56,575 90,575 120,570 145,550|90,575 100,600 130,600 165,620 170,645|57,605 80,610 110,630 135,655|180,545 200,560 205,590 190,600 165,620|205,560 250,555 300,580 310,560 300,540 250,540 240,520|310,560 350,540 400,545 435,560|360,500 370,525 400,545|300,580 330,590 360,600 365,635 320,650|250,555 255,590 225,600 205,590|255,590 290,595 280,620 285,650|205,610 200,655|165,610 195,610 195,650|145,550 150,580 180,590|310,595 330,588 335,600 315,610 310,595|105,600 120,620 150,630|255,615 280,615 300,635 330,630|380,480 385,510 440,515|330,455 335,480 370,490|60,630 90,625 110,630|95,530 75,540|105,545 110,560 125,570|435,560 450,540 500,520|400,500 405,520 370,525`.split('|').map((s) => rough(parse(s))).join('');
  const straight = 'M472 310H603M740 50L690 100M620 135L560 187M545 488L650 491 725 497M130 356L240 362M300 430L440 428';

  // built-up areas: [cx, cy, rx, ry, cell]
  const towns = [[295, 268, 52, 42, 15], [325, 248, 32, 24, 14], [325, 290, 32, 18, 14], [370, 270, 25, 20, 17], [415, 322, 25, 17, 11], [440, 335, 16, 9, 10], [580, 272, 22, 13, 11], [655, 283, 14, 11, 10], [520, 360, 20, 13, 11], [450, 417, 18, 14, 11], [350, 380, 22, 14, 13], [660, 345, 20, 12, 11], [787, 515, 24, 20, 12], [785, 200, 34, 22, 14], [682, 108, 20, 13, 11], [515, 88, 30, 12, 12], [187, 475, 20, 16, 12], [65, 332, 16, 15, 11], [238, 600, 26, 13, 14], [222, 152, 15, 18, 11], [385, 218, 20, 15, 13], [435, 122, 22, 12, 13], [567, 325, 13, 9, 10], [240, 432, 19, 8, 11], [823, 298, 14, 9, 11], [115, 288, 18, 10, 13], [172, 188, 16, 7, 11], [535, 400, 20, 12, 13], [255, 295, 26, 24, 15], [160, 260, 18, 10, 13], [325, 88, 16, 8, 12], [533, 290, 22, 9, 13], [480, 48, 14, 6, 11], [130, 640, 26, 12, 16], [195, 575, 18, 14, 15], [350, 345, 20, 12, 14], [105, 190, 20, 12, 14], [815, 215, 16, 22, 14]];
  const cells = towns.map(([cx, cy, rx, ry, cell]) => {
    const s = cell * 0.78;
    const nx = Math.ceil(rx / s), ny = Math.ceil(ry / s);
    const g = new Map();
    for (let i = -nx; i <= nx; i++) for (let j = -ny; j <= ny; j++) {
      const x = i * s + rnd() * s * 0.85, y = j * s + rnd() * s * 0.85;
      if ((x / rx) ** 2 + (y / ry) ** 2 < 1.1) g.set(i + ',' + j, [cx + x, cy + y]);
    }
    let d = '';
    for (const [k, p] of g) {
      const [i, j] = k.split(',').map(Number);
      for (const o of [[1, 0], [0, 1]]) {
        const q = g.get(i + o[0] + ',' + (j + o[1]));
        if (q && rnd() < 0.36) d += rough([p, q], 0.5);
      }
    }
    return d;
  }).join('');
</script>

{#snippet ico(k, size = 24)}
  <svg class="i{size}" viewBox="0 0 24 24" fill="none">{@html icons[k]}</svg>
{/snippet}

{#snippet bar(items)}
  <div class="bar">
    {#each items as t}
      {#if t === '|'}<div class="grip"><i></i><i></i></div>
      {:else if t === '/'}<div class="sep"></div>
      {:else if t === 'v' || t === 'w'}<div class="drop" class:dim={t === 'w'}><b></b></div>
      {:else if t === '^'}<div class="drop boxed"><b></b></div>
      {:else}<div class="slot" class:press={t[0] === '!'}>{@render ico(t.replace('!', ''))}</div>{/if}
    {/each}
  </div>
{/snippet}

{#snippet head(title, w)}
  <div class="head"><span use:fit={w}>{title}</span><div>{@render ico('float', 11)}{@render ico('close', 11)}</div></div>
{/snippet}

<div class="app">
  <header class="title">{@render ico('logo', 16)}<span use:fit={106}>*qgisProj02 — QGIS</span></header>
  <nav class="menu">
    {#each menus as [t, k, w]}
      {@const c = cutAt(t, k)}
      <span use:fit={w}>{c[0]}<u>{c[1]}</u>{c[2]}</span>
    {/each}
  </nav>
  {@render bar(bar1)}
  {@render bar(bar2)}

  <div class="body">
    <aside>
      <section class="browser">
        {@render head('Browser', 39)}
        <div class="tools">
          {#each ['addlay', 'refresh', 'funnel', 'collapse', 'info'] as k}<div>{@render ico(k, 16)}</div>{/each}
        </div>
        <div class="list">
          {#each tree1 as [k, t, w, deep, twist]}
            <div class="row" class:deep>
              <em class:twist></em>{@render ico(k, 16)}<span use:fit={w}>{t}</span>
            </div>
          {/each}
        </div>
      </section>
      <div class="split"></div>
      <section class="layers">
        {@render head('Layers', 33)}
        <div class="tools low">
          {#each ['broom', 'group', 'eye', 'funnel2', 'eps'] as k}<div>{@render ico(k, 16)}</div>{/each}
          <p><b></b></p>
          {#each ['expand', 'collapse', 'remove'] as k}<div>{@render ico(k, 16)}</div>{/each}
        </div>
        <div class="list">
          {#each layers as [t, c, w, st, mem]}
            <div class="lay {st || 'off'}">
              <div class="cb">{#if st}<svg viewBox="0 0 12 12"><path d="M2.500 5.500L5 9l4.500-7" fill="none" stroke="#000" stroke-width="2" /></svg>{/if}</div>
              <div class="sw {c}"></div>
              <span use:fit={w}>{t}</span>
              {#if mem}<div class="mem">{@render ico('mem', 13)}</div>{/if}
            </div>
          {/each}
        </div>
      </section>
    </aside>
    <div class="vsplit"></div>
    <main>
      <div class="banner">
        {@render ico('check', 24)}
        <strong use:fit={90}>Layer Exported:</strong>
        <span use:fit={164.5}>Successfully saved vector layer to</span>
        <a href="#shp" use:fit={577}>D:\OneDrive - University College London\T2\CASA0023 Remote Sensing\data\wk3_bristol\clipedlandsat8to9v3_final.shp</a>
      </div>
      <div class="canvas">
        <svg class="map" viewBox="0 0 885 675">
          <path d={land} fill="#f4a4b2" stroke="#333" stroke-width="3.600" stroke-linejoin="round" />
          <path d={borders + straight + cells} fill="none" stroke="#383234" stroke-width="2.900" stroke-linejoin="round" />
        </svg>
      </div>
    </main>
  </div>
</div>

<style>
  :global(body) { margin: 0; overflow: hidden; }
  .app { width: 1401px; height: 1216px; display: flex; flex-direction: column; overflow: hidden; background: #f0f0f0; color: #000; font: 11px/18px 'DejaVu Sans Condensed', 'DejaVu Sans', sans-serif; font-stretch: condensed; white-space: nowrap; }
  span, strong, a { flex: none; }
  svg { display: block; flex: none; overflow: visible; }
  .i24 { width: 24px; height: 24px; }
  .i16 { width: 16px; height: 16px; }
  .i11 { width: 11px; height: 11px; }
  .i13 { width: 13px; height: 13px; }
  .title { height: 26px; flex: none; display: flex; align-items: center; gap: 6px; padding-bottom: 5px; box-sizing: border-box; margin-left: -5px; background: linear-gradient(90deg, #eef2fa, #eef3f8 55%, #eff3fc); font: 12px 'Open Sans', 'Noto Sans', sans-serif; }
  .menu { height: 17px; flex: none; display: flex; align-items: center; gap: 13.950px; margin-left: -5.500px; border-bottom: 1px solid #d4d4d4; line-height: 15px; }
  .menu span { padding-top: 2px; }
  u { text-underline-offset: 1px; }
  .bar { height: 38px; flex: none; display: flex; align-items: center; margin-left: -0.600px; border-bottom: 1px solid #b3b3b3; background: linear-gradient(#fbfbfb, #eee); }
  .slot { width: 32.920px; height: 32px; flex: none; display: flex; align-items: center; justify-content: center; }
  .slot svg { width: 22.500px; height: 22.500px; }
  .press { box-sizing: border-box; width: 31px; margin: 0 1px; border: 1px solid #a9a9a9; border-radius: 2px; background: #dcdcdc; }
  .press:has(+ .boxed) { margin-right: 0; }
  .grip { width: 16.400px; flex: none; display: flex; gap: 2px; justify-content: flex-end; padding-right: 4px; box-sizing: border-box; }
  .grip i { width: 1px; height: 17px; background: repeating-linear-gradient(#bbb 0 1px, transparent 1px 3px); }
  .sep { width: 7px; height: 19px; flex: none; background: linear-gradient(#d2d2d2, #d2d2d2) 4px 0 / 1px 100% no-repeat; }
  .drop { width: 12.100px; height: 32px; flex: none; display: flex; align-items: center; justify-content: center; }
  .drop b, p b { border: 4px solid transparent; border-top-color: #505050; border-bottom: 0; }
  .drop.dim b { border-top-color: #a0a0a0; }
  .boxed { box-sizing: border-box; border: 1px solid #a9a9a9; border-radius: 2px; background: #dcdcdc; margin-right: 2px; }
  .body { flex: 1; display: flex; min-height: 0; }
  aside { width: 266px; flex: none; display: flex; flex-direction: column; }
  .browser { height: 617px; flex: none; display: flex; flex-direction: column; }
  .head { height: 20px; flex: none; display: flex; justify-content: space-between; align-items: center; margin-left: -10px; padding-right: 2px; }
  .head span { padding-top: 1px; }
  .head div { display: flex; gap: 3px; margin-top: -1px; }
  .tools { height: 30px; flex: none; display: flex; align-items: center; margin-left: -9.500px; padding-bottom: 2px; box-sizing: border-box; }
  .tools div { width: 25px; flex: none; display: flex; justify-content: center; }
  .tools.low { padding-bottom: 3px; }
  .tools.low div { width: 25.200px; }
  .tools p { width: 9px; margin: 0; display: flex; justify-content: center; }
  .list { flex: 1; border: 1px solid #b0b0b0; border-left: 0; background: #fff; min-height: 0; padding-top: 1px; }
  .row { height: 18px; display: flex; align-items: center; padding-left: 7px; }
  .row span { margin-left: 5.500px; line-height: 16px; padding-top: 2px; }
  .row svg { width: 15.500px; height: 15.500px; margin-top: -1px; }
  .deep em { width: 16px; }
  .deep em.twist { width: 4px; height: 0; margin: -2px 9px 0 3px; border: 3.500px solid transparent; border-left: 4px solid #555; border-right: 0; box-sizing: border-box; }
  .split { height: 6px; flex: none; background: repeating-linear-gradient(90deg, #aaa 0 1px, transparent 1px 3px) 120px 2px / 17px 1px no-repeat; }
  .layers { flex: 1; display: flex; flex-direction: column; min-height: 0; }
  .layers .list { padding-top: 0; border-bottom: 0; }
  .lay { height: 18px; display: flex; align-items: center; padding: 0 8px 0 11px; font-weight: 700; font-size: 11.500px; line-height: 16px; }
  .lay span { margin-left: 6px; padding-top: 2px; }
  .off { color: #808080; font-style: italic; }
  .sel { color: #fff; background: linear-gradient(90deg, #0078d7 49px, transparent 49px), linear-gradient(#1a88e2, #0a7bd8); }
  .sel span { text-decoration: underline; }
  .cb { width: 14px; height: 14px; flex: none; box-sizing: border-box; border: 1px solid #bcbcbc; background: #fff; margin-right: 6px; }
  .cb svg { width: 12px; height: 12px; }
  .sw { width: 16px; height: 16px; flex: none; box-sizing: border-box; border: 1px solid #00000088; }
  .pink { background: #f4a4b2; } .rose { background: #e9718d; } .purple { background: #987db7; } .magenta { background: #e15989; }
  .brown { background: #91522d; } .orange { background: #e77148; } .lime { background: #becf50; } .gold { background: #e5b636; }
  .tan { background: #beb297; } .red { background: #b7484b; } .slate { background: #7d8b8f; }
  .ring { background: #fff; border: 2.500px solid #3579b1; outline: 0.500px solid #3579b1; outline-offset: -3px; }
  .mem { margin-left: auto; width: 17px; height: 16px; box-sizing: border-box; border: 1px solid #dedede; background: #f7f7f7; display: flex; align-items: center; justify-content: center; }
  .vsplit { width: 6px; flex: none; background: repeating-linear-gradient(#aaa 0 1px, transparent 1px 3px) 3px 611px / 1px 17px no-repeat; }
  main { flex: 1; min-width: 0; border-left: 1px solid #a9a9a9; background: #fff; display: flex; flex-direction: column; }
  .banner { height: 40px; flex: none; box-sizing: border-box; display: flex; align-items: center; padding: 2px 0 0 16px; border: 1px solid #8da58a; border-width: 1px 0; background: #dff0d8; }
  .banner svg { margin-right: 10px; }
  .banner span { margin: 0 3px 0 1.500px; }
  .banner a { color: #2a8000; }
  .canvas { padding: 503px 0 0 437px; }
  .map { width: 295px; height: 225px; }
</style>
